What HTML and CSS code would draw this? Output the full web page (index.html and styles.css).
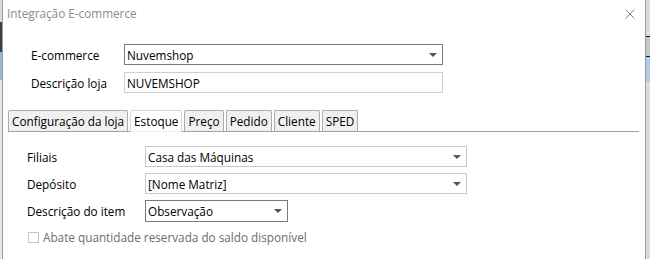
FILE: index.html
```html
<!DOCTYPE html>
<html lang="pt-BR">
<head>
<meta charset="utf-8">
<title>Integração E-commerce</title>
<link rel="stylesheet" href="styles.css">
</head>
<body>
<div class="screen">
  <div class="bg-left"><span class="bl1"></span><span class="bl2"></span><span class="bl3"></span></div>
  <div class="dialog">
    <div class="titlebar">
      <span class="title">Integração E-commerce</span>
      <svg class="close" width="10" height="10" viewBox="0 0 10 10"><path d="M0.5 0.5 L9.5 9.5 M9.5 0.5 L0.5 9.5" stroke="#808080" stroke-width="1" fill="none"/></svg>
    </div>
    <div class="form-top">
      <label class="lbl">E-commerce</label>
      <div class="combo dark"><span>Nuvemshop</span><i class="arrow"></i></div>
      <label class="lbl">Descrição loja</label>
      <div class="edit"><span>NUVEMSHOP</span></div>
    </div>
    <div class="tabs-area">
      <div class="tabstrip">
        <div class="tab">Configuração da loja</div>
        <div class="tab active">Estoque</div>
        <div class="tab">Preço</div>
        <div class="tab">Pedido</div>
        <div class="tab">Cliente</div>
        <div class="tab">SPED</div>
      </div>
      <div class="panel">
        <div class="panel-grid">
          <label class="lbl">Filiais</label>
          <div class="combo wide"><span>Casa das Máquinas</span><i class="arrow"></i></div>
          <label class="lbl">Depósito</label>
          <div class="combo wide"><span>[Nome Matriz]</span><i class="arrow"></i></div>
          <label class="lbl">Descrição do item</label>
          <div class="combo dark short"><span>Observação</span><i class="arrow"></i></div>
        </div>
        <div class="check-row">
          <span class="checkbox"></span>
          <span class="check-text">Abate quantidade reservada do saldo disponível</span>
        </div>
      </div>
    </div>
  </div>
  <div class="bg-right"><span class="br1"></span><span class="br2"></span><span class="br3"></span></div>
</div>
</body>
</html>
```

FILE: styles.css
```css
* { box-sizing: border-box; }
html, body { margin: 0; padding: 0; }
body {
  width: 650px;
  height: 259px;
  overflow: hidden;
  background: #f0f0f0;
  font-family: "Open Sans", "Noto Sans", sans-serif;
  font-size: 11.75px;
  color: #000;
}
.screen { display: flex; height: 259px; }

.bg-left { width: 2px; display: flex; flex-direction: column; background: #e6e6e6; }
.bg-left span { display: block; width: 2px; }
.bl1 { height: 22px; background: #d8d8e8; }
.bl2 { height: 30px; background: #404040; }
.bl3 { height: 28px; background: #9ab8d0; }

.bg-right { width: 4px; display: flex; flex-direction: column; background: #dcdcdc; padding-top: 36px; }
.bg-right span { display: block; width: 4px; }
.br1 { height: 1px; background: #1a1a1a; }
.br2 { height: 20px; background: #c8c8c8; border-bottom: 1px solid #1a1a1a; }
.br3 { height: 25px; background: #b4cce4; }

.dialog {
  width: 644px;
  height: 259px;
  background: #fff;
  border-left: 1px solid #9a9a9a;
  border-right: 1px solid #9a9a9a;
  display: flex;
  flex-direction: column;
}

.titlebar {
  height: 28px;
  display: flex;
  align-items: center;
  justify-content: space-between;
  padding: 0 10px 2px 4px;
}
.title { color: #8e8a96; font-size: 11.75px; }
.close { display: block; margin-top: 1px; }

.form-top {
  display: grid;
  grid-template-columns: 93px 319px;
  row-gap: 7px;
  padding: 16px 0 0 28px;
  align-items: center;
}
.lbl { white-space: nowrap; }

.combo, .edit {
  height: 21px;
  border: 1px solid #c8c8c8;
  display: flex;
  align-items: center;
  justify-content: space-between;
  padding: 0 5px 0 2px;
  background: #fff;
}
.combo.dark { border-color: #7a7a7a; }
.edit { border-color: #cfcfcf; }
.combo.wide { width: 322px; }
.combo.short { width: 143px; height: 22px; }
.arrow {
  width: 0; height: 0;
  border-left: 4px solid transparent;
  border-right: 4px solid transparent;
  border-top: 4px solid #555;
}

.tabs-area { margin: 17px 6px 0 5px; }
.tabstrip {
  display: flex;
  gap: 2px;
  border-bottom: 1px solid #a0a0a0;
  height: 22px;
  align-items: flex-end;
}
.tab {
  height: 21px;
  padding: 0 3px;
  border: 1px solid #acacac;
  border-bottom: none;
  border-radius: 2px 2px 0 0;
  background: #f0f0f0;
  display: flex;
  align-items: center;
  white-space: nowrap;
}
.tab.active {
  background: #fff;
  height: 22px;
  margin-bottom: -1px;
  border-color: #d9d9d9;
  border-bottom: 1px solid #eaf2fb;
}

.panel { padding: 14px 0 0 19px; }
.panel-grid {
  display: grid;
  grid-template-columns: 118px auto;
  row-gap: 6px;
  align-items: center;
  justify-items: start;
}
.check-row {
  display: flex;
  align-items: center;
  gap: 4px;
  margin-top: 7px;
  padding-left: 1px;
}
.checkbox {
  width: 11px;
  height: 11px;
  border: 1px solid #c4c4c4;
  background: #fff;
}
.check-text { color: #6d6d6d; }
```
